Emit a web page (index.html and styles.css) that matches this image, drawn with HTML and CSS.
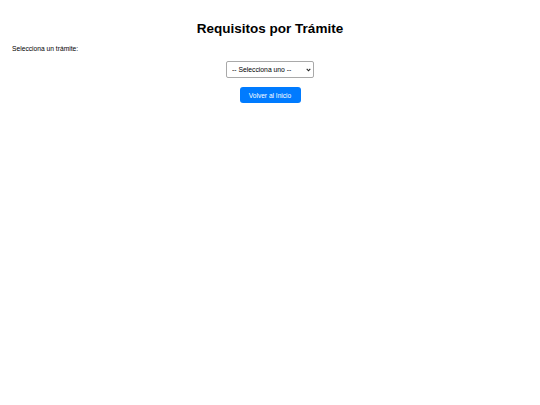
FILE: index.html
```html
<!DOCTYPE html>
<html lang="es">
<head>
<meta charset="utf-8">
<title>Requisitos por Trámite</title>
<link rel="stylesheet" href="styles.css">
</head>
<body>
<div class="page">
  <h1 class="title">Requisitos por Trámite</h1>
  <label class="label" for="tramite">Selecciona un trámite:</label>
  <div class="center">
    <div class="select-wrap">
      <select id="tramite" class="select">
        <option>-- Selecciona uno --</option>
      </select>
      <svg class="chev" width="5" height="4" viewBox="0 0 5 4" aria-hidden="true"><path d="M0.7 0.9 L2.5 2.8 L4.3 0.9" fill="none" stroke="#222" stroke-width="1.1"/></svg>
    </div>
  </div>
  <div class="center">
    <button class="btn" type="button">Volver al Inicio</button>
  </div>
</div>
</body>
</html>
```
FILE: styles.css
```css
html, body {
  margin: 0;
  padding: 0;
  background: #ffffff;
}
.page {
  padding: 21px 12px 0 12px;
  font-family: "Liberation Sans", Arial, sans-serif;
  color: #000;
}
.title {
  margin: 0 0 7px 0;
  font-size: 13.5px;
  line-height: 16px;
  font-weight: bold;
  text-align: center;
}
.label {
  display: block;
  font-size: 6.7px;
  line-height: 9px;
  margin-bottom: 8px;
}
.center {
  display: flex;
  justify-content: center;
}
.select-wrap {
  position: relative;
  margin-bottom: 9px;
}
.select {
  display: block;
  width: 88px;
  height: 17px;
  -webkit-appearance: none;
  appearance: none;
  font-family: "Liberation Sans", Arial, sans-serif;
  font-size: 6.8px;
  border: 1px solid #a9a9a9;
  border-radius: 2px;
  background: #fff;
  color: #000;
  padding: 0 0 0 5px;
}
.chev {
  position: absolute;
  right: 3px;
  top: 7px;
  pointer-events: none;
}
.btn {
  display: block;
  width: 61px;
  height: 16px;
  background: #007bff;
  color: #fff;
  border: none;
  border-radius: 3px;
  font-family: "Liberation Sans", Arial, sans-serif;
  font-size: 6.6px;
  padding: 0;
}
```
